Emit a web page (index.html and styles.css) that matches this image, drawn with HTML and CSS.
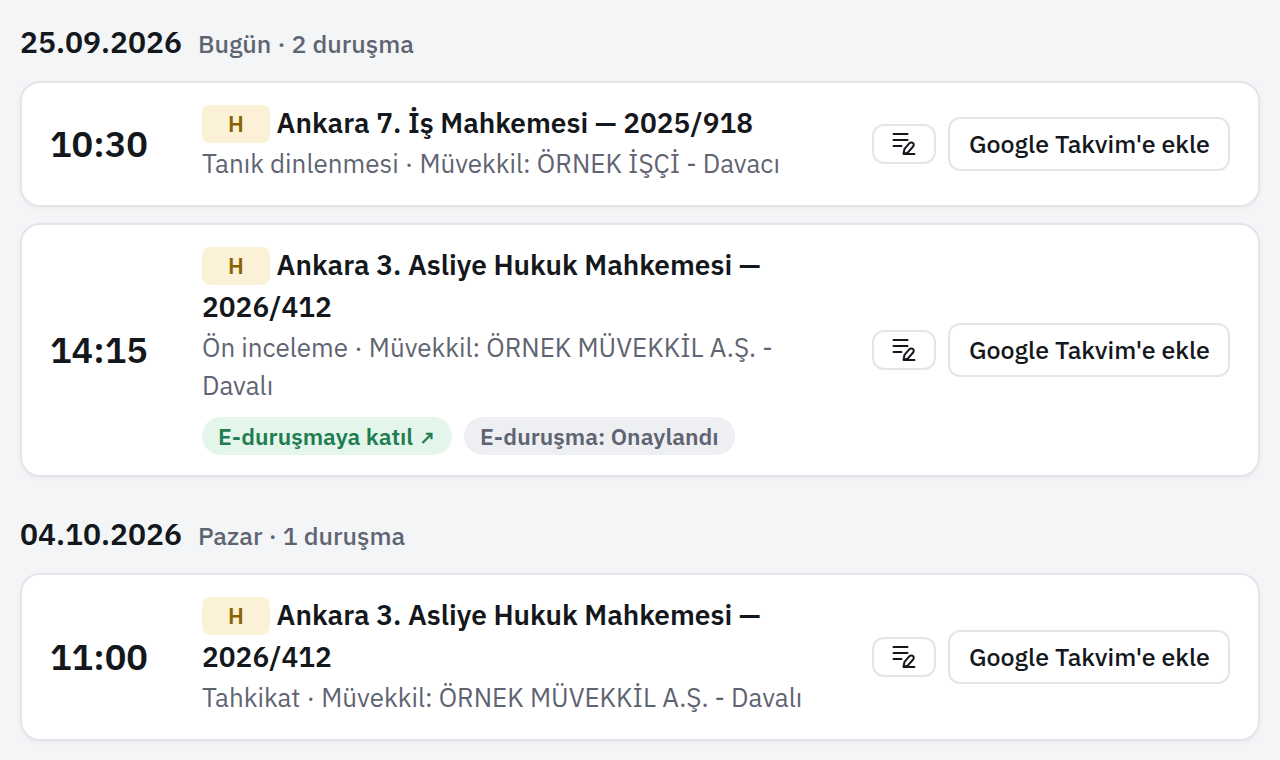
FILE: index.html
```html
<!DOCTYPE html>
<html lang="tr">
<head>
<meta charset="utf-8">
<meta name="viewport" content="width=device-width, initial-scale=1">
<title>Duruşmalar</title>
<link rel="stylesheet" href="styles.css">
</head>
<body>
<svg class="sprite" aria-hidden="true">
  <symbol id="note-edit" viewBox="0 0 24 24">
    <path d="M1.500 2h14M1.500 8h14M1.500 14h8"/>
    <path d="M11.500 22l1-5.200 5-5.600a2.400 2.400 0 0 1 3.600 3.300L16 20.400 11.500 22h11"/>
  </symbol>
</svg>
<main class="agenda">
  <section class="day">
    <h2 class="day-head"><span class="day-date">25.09.2026</span> <span class="day-info">Bugün · 2 duruşma</span></h2>
    <article class="card">
      <time class="time">10:30</time>
      <div class="body">
        <h3 class="title"><span class="badge">H</span> Ankara 7. İş Mahkemesi — 2025/918</h3>
        <p class="detail">Tanık dinlenmesi · Müvekkil: ÖRNEK İŞÇİ - Davacı</p>
      </div>
      <div class="actions">
        <button class="btn btn-icon" type="button" aria-label="Not ekle"><svg class="icon"><use href="#note-edit"/></svg></button>
        <button class="btn" type="button">Google Takvim'e ekle</button>
      </div>
    </article>
    <article class="card">
      <time class="time">14:15</time>
      <div class="body">
        <h3 class="title"><span class="badge">H</span> Ankara 3. Asliye Hukuk Mahkemesi — 2026/412</h3>
        <p class="detail">Ön inceleme · Müvekkil: ÖRNEK MÜVEKKİL A.Ş. - Davalı</p>
        <div class="chips">
          <a class="chip chip-join" href="#">E-duruşmaya katıl <span class="arrow">↗</span></a>
          <span class="chip">E-duruşma: Onaylandı</span>
        </div>
      </div>
      <div class="actions">
        <button class="btn btn-icon" type="button" aria-label="Not ekle"><svg class="icon"><use href="#note-edit"/></svg></button>
        <button class="btn" type="button">Google Takvim'e ekle</button>
      </div>
    </article>
  </section>
  <section class="day">
    <h2 class="day-head"><span class="day-date">04.10.2026</span> <span class="day-info">Pazar · 1 duruşma</span></h2>
    <article class="card">
      <time class="time">11:00</time>
      <div class="body">
        <h3 class="title"><span class="badge">H</span> Ankara 3. Asliye Hukuk Mahkemesi — 2026/412</h3>
        <p class="detail">Tahkikat · Müvekkil: ÖRNEK MÜVEKKİL A.Ş. - Davalı</p>
      </div>
      <div class="actions">
        <button class="btn btn-icon" type="button" aria-label="Not ekle"><svg class="icon"><use href="#note-edit"/></svg></button>
        <button class="btn" type="button">Google Takvim'e ekle</button>
      </div>
    </article>
  </section>
</main>
</body>
</html>
```
FILE: styles.css
```css
* { box-sizing: border-box; }
body {
  margin: 0;
  background: #f3f5f7;
  color: #14171c;
  font-family: "IBM Plex Sans", "Noto Sans", sans-serif;
}
h2, h3, p { margin: 0; }
.sprite { position: absolute; width: 0; height: 0; }
.agenda {
  display: flex;
  flex-direction: column;
  gap: 35px;
  padding: 20px 20px 19px;
}
.day { display: flex; flex-direction: column; gap: 16px; }
.day-head {
  display: flex;
  align-items: baseline;
  gap: 16px;
  margin-bottom: -1px;
  line-height: 44px;
}
.day-date { font-size: 30px; font-weight: 600; }
.day-info { font-size: 25px; font-weight: 500; color: #5f6472; }
.card {
  display: flex;
  align-items: center;
  gap: 32px;
  padding: 19px 28px 20px;
  background: #fff;
  border: 2px solid #e3e5ea;
  border-radius: 20px;
  box-shadow: 0 2px 4px rgba(20, 23, 28, 0.04);
}
.time { flex: 0 0 120px; font-size: 36px; font-weight: 600; line-height: 48px; }
.body { flex: 1; min-width: 0; }
.title { font-size: 28px; font-weight: 600; line-height: 42px; }
.badge {
  display: inline-block;
  width: 68px;
  margin-top: 3px;
  border-radius: 8px;
  background: #fbf1d6;
  color: #8a6400;
  font-size: 22px;
  line-height: 38px;
  text-align: center;
  vertical-align: top;
}
.detail { margin-bottom: 3px; font-size: 26px; line-height: 38px; color: #5f6472; }
.chips { display: flex; flex-wrap: wrap; gap: 12px; margin-top: 13px; }
.chip {
  padding: 0 16px;
  border-radius: 20px;
  background: #eeeff3;
  color: #5f6472;
  font-size: 23px;
  font-weight: 600;
  line-height: 38px;
  text-decoration: none;
}
.chip-join { background: #e4f5ec; color: #1f7d50; }
.arrow { font-size: 20px; line-height: 1; }
.actions { display: flex; align-items: center; gap: 12px; }
.btn {
  padding: 8px 18px 8px 19px;
  background: #fff;
  border: 2px solid #e3e5ea;
  border-radius: 12px;
  color: #14171c;
  font: inherit;
  font-size: 25px;
  font-weight: 500;
  line-height: 34px;
  white-space: nowrap;
}
.btn-icon { display: flex; justify-content: center; width: 64px; padding: 6px 0; }
.icon {
  width: 24px;
  height: 24px;
  fill: none;
  stroke: currentColor;
  stroke-width: 2;
  stroke-linecap: round;
  stroke-linejoin: round;
}
```
